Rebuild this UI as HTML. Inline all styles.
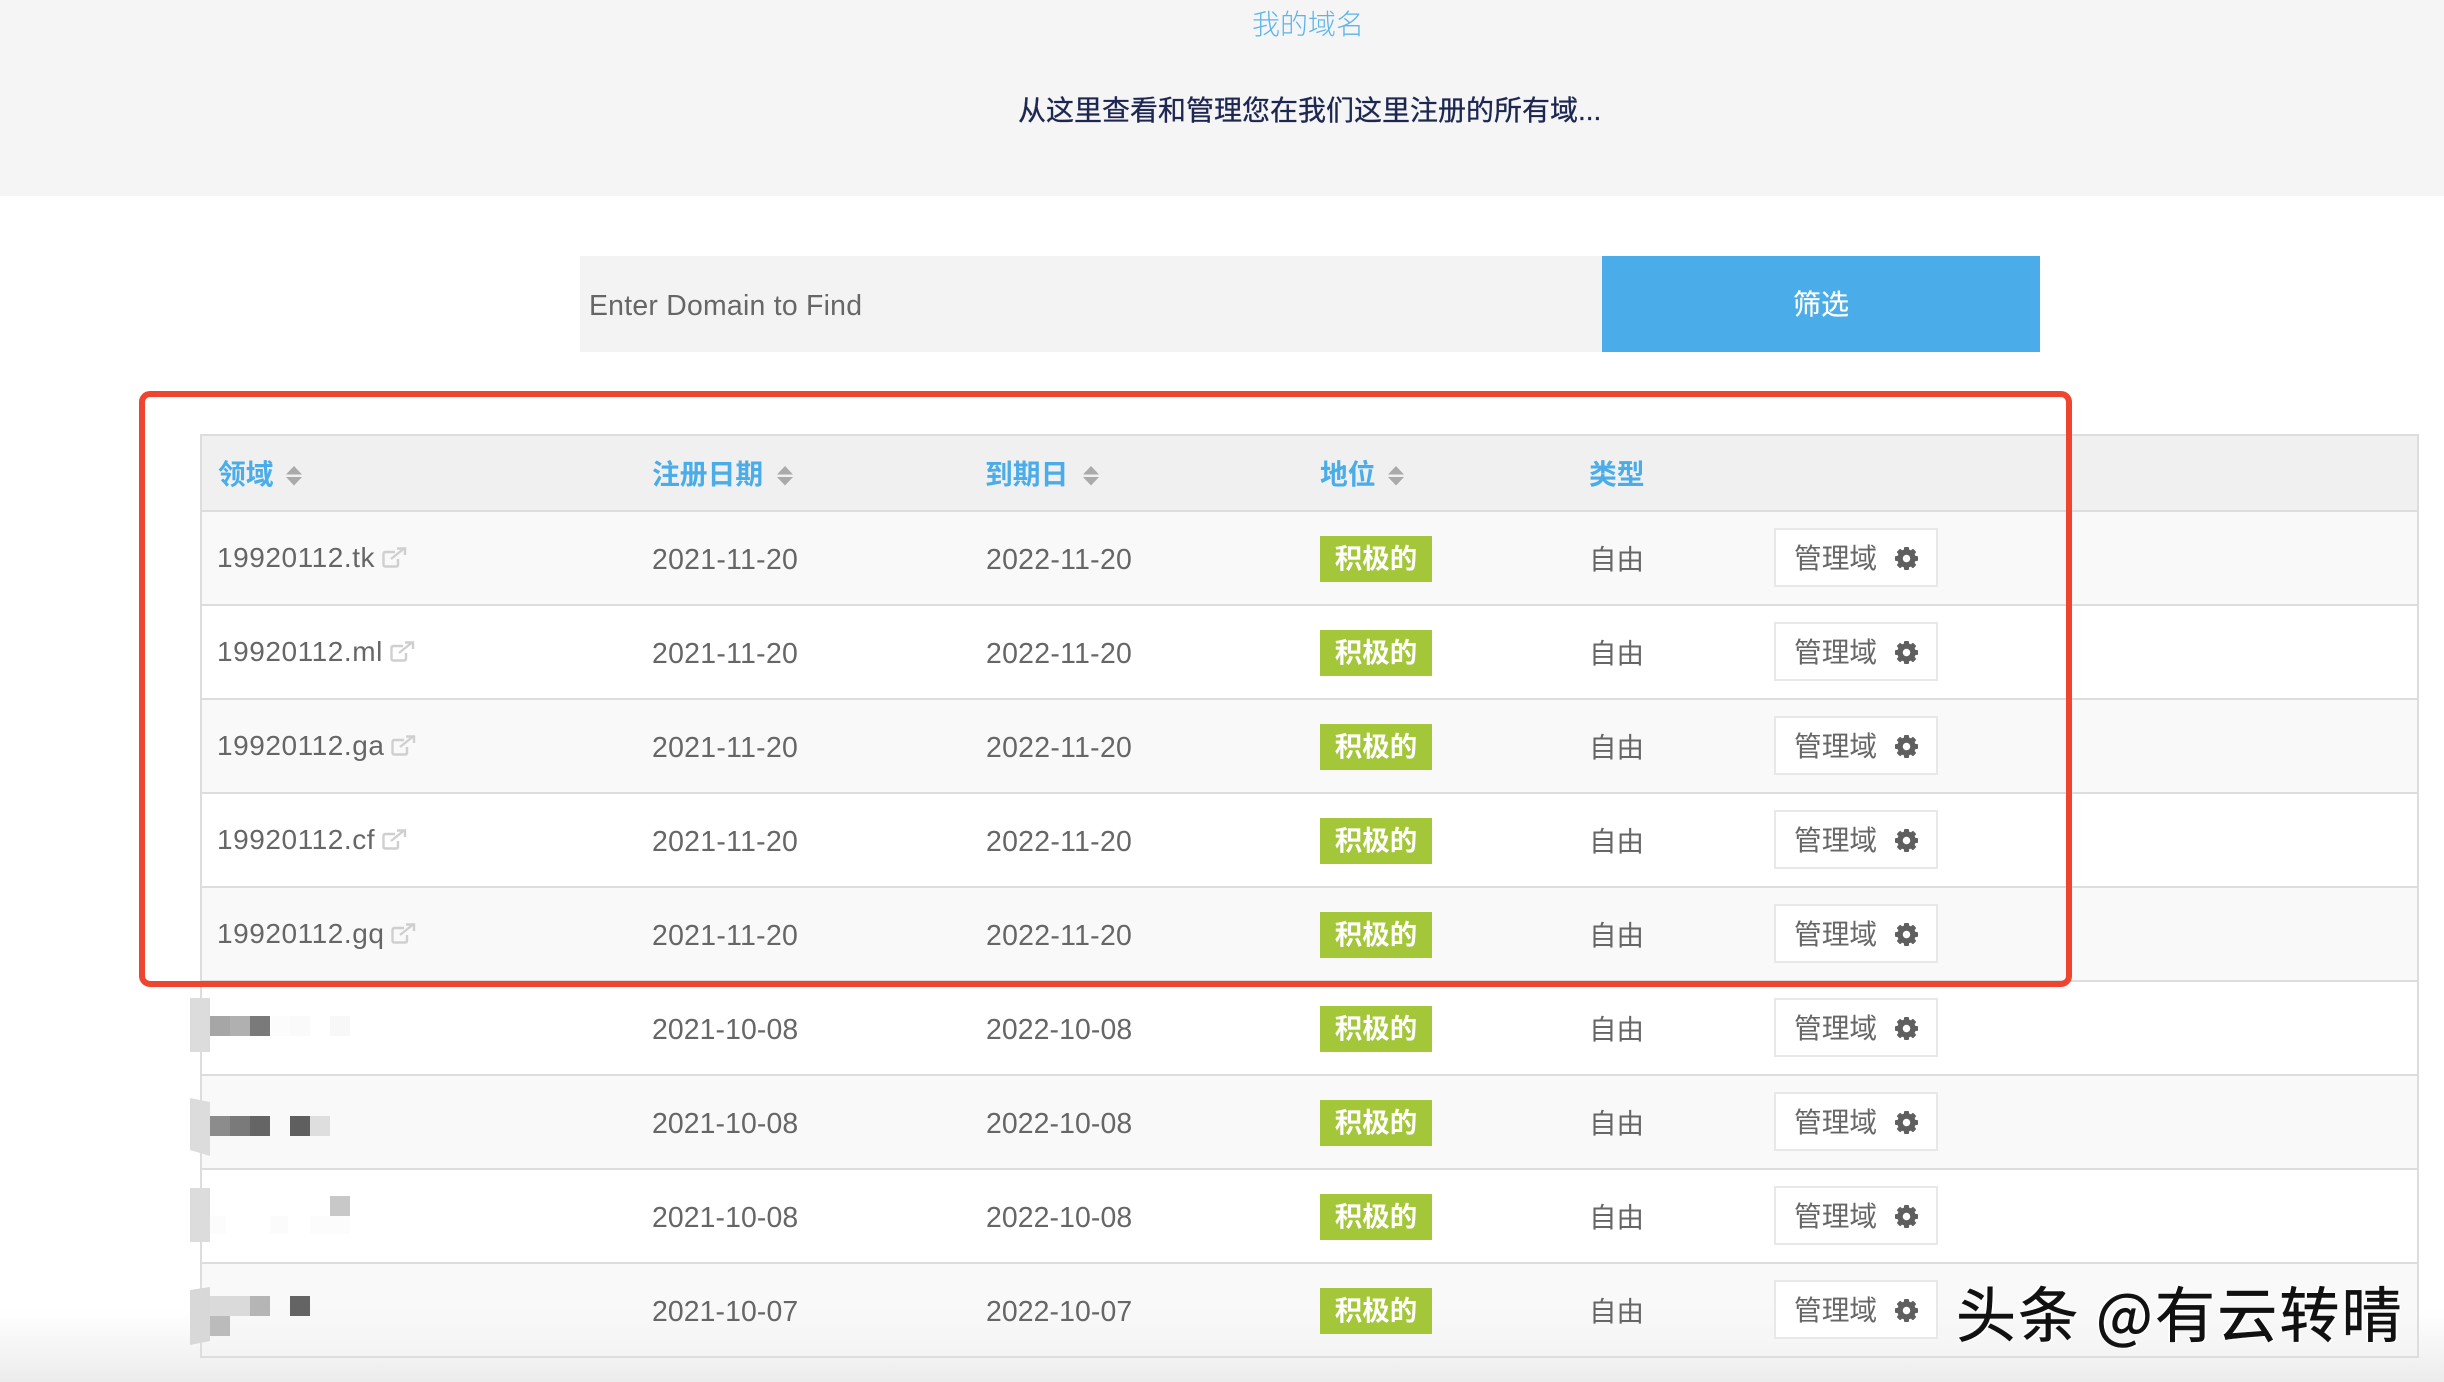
<!DOCTYPE html>
<html lang="zh"><head><meta charset="utf-8"><title>我的域名</title>
<style>
html,body{margin:0;padding:0;background:#fff}
body{width:2444px;height:1382px;position:relative;overflow:hidden;font-family:"Liberation Sans","Noto Sans CJK SC",sans-serif;color:#666;font-size:28px}
.band{position:absolute;left:0;top:0;width:2444px;height:196px;background:#f5f5f5}
.t{position:absolute;white-space:nowrap}
.title{margin-left:172px;width:2272px;text-align:center;top:5px;line-height:40px;font-size:28px;color:#5db4ea;font-weight:300}
.sub{left:1018px;top:91px;line-height:40px;font-size:28px;color:#1d2752;-webkit-text-stroke:.3px #1d2752}
.input{position:absolute;left:580px;top:256px;width:1022px;height:96px;background:#f3f3f3}
.ph{left:589px;top:286px;line-height:40px;font-size:28.4px;letter-spacing:.25px;color:#666}
.go{position:absolute;left:1602px;top:256px;width:438px;height:96px;background:#4aace8;color:#fff;text-align:center;line-height:98px;font-size:28px;-webkit-text-stroke:.2px #fff}
.tbl{position:absolute;left:200px;top:434px;width:2215px;height:920px;border:2px solid #ddd;box-sizing:content-box}
.head{position:absolute;left:200px;top:434px;width:2219px;height:78px;background:#f0f0f0;border:2px solid #ddd;box-sizing:border-box}
.h{position:absolute;top:455px;line-height:40px;color:#4aace8;font-weight:700;font-size:27.8px;white-space:nowrap}
.sort{position:absolute;top:466px}
.r{position:absolute;left:202px;width:2215px;height:94px;border-bottom:2px solid #ddd;box-sizing:border-box}
.odd{background:#f9f9f9}
.last{background:linear-gradient(#f9f9f9 45%,#f4f4f4)}
.r>*{position:absolute;white-space:nowrap}
.d{left:15px;top:26px;line-height:40px;letter-spacing:.55px;font-size:28px}
.d svg{margin-left:7px;vertical-align:-1px}
.a{left:450px;top:28px;line-height:40px;font-size:28.4px;letter-spacing:.3px}
.b{left:784px;top:28px;line-height:40px;font-size:28.4px;letter-spacing:.3px}
.n{letter-spacing:.1px}
.s{left:1118px;top:24px;width:112px;height:46px;background:#a4c639;color:#fff;font-weight:700;text-align:center;line-height:46px;font-size:27.5px}
.k{left:1387px;top:28px;line-height:40px;font-size:27.5px}
.m{left:1572px;top:16px;width:164px;height:59px;background:#fff;border:2px solid #e8e8e8;box-sizing:border-box}
.m b{position:absolute;left:18px;top:8.5px;line-height:40px;font-weight:400;font-size:27.7px}
.m svg{position:absolute;left:119px;top:17px}
.px{position:absolute}
.fade{position:absolute;left:0;top:1310px;width:2444px;height:72px;background:linear-gradient(rgba(236,236,236,0),#ececec)}
.red{position:absolute;left:139px;top:391px;width:1933px;height:596px;border:6px solid #ee4430;border-radius:11px;box-sizing:border-box}
.wm{position:absolute;left:1956px;top:1272px;line-height:80px;font-size:60px;color:#111;white-space:nowrap;font-weight:400;font-family:"WenQuanYi Zen Hei","Noto Sans CJK SC",sans-serif;-webkit-text-stroke:.6px #111;text-shadow:-2px -1px 0 #fff,2px 1px 0 #fff;letter-spacing:2.2px}
</style></head><body>
<svg width="0" height="0" style="position:absolute"><defs>
<g id="gear"><circle cx="11.5" cy="11.5" r="6.5" fill="none" stroke="#5f5f5f" stroke-width="5.5"/><g fill="#5f5f5f"><rect x="9" y="0" width="5" height="5" rx="1"/><rect x="9" y="18" width="5" height="5" rx="1"/><rect x="0" y="9" width="5" height="5" rx="1"/><rect x="18" y="9" width="5" height="5" rx="1"/><rect x="9" y="0" width="5" height="5" rx="1" transform="rotate(45 11.5 11.5)"/><rect x="9" y="18" width="5" height="5" rx="1" transform="rotate(45 11.5 11.5)"/><rect x="0" y="9" width="5" height="5" rx="1" transform="rotate(45 11.5 11.5)"/><rect x="18" y="9" width="5" height="5" rx="1" transform="rotate(45 11.5 11.5)"/></g></g>
<g id="ext" fill="none" stroke="#cfcfcf" stroke-width="2.4"><path d="M13 5H3.5Q1.5 5 1.5 7V17.5Q1.5 19.5 3.5 19.5H14Q16 19.5 16 17.5V12"/><path d="M9 12L22 1.5"/><path d="M15 1.5H23V8"/></g>
<g id="sort" fill="#aaa"><path d="M8 0L16 8.5H0Z"/><path d="M0 11H16L8 19.5Z"/></g>
</defs></svg>

<div class="band"></div>
<div class="t title">我的域名</div>
<div class="t sub">从这里查看和管理您在我们这里注册的所有域...</div>
<div class="input"></div>
<div class="t ph">Enter Domain to Find</div>
<div class="go">筛选</div>

<div class="fade"></div>
<div class="tbl"></div>
<div class="head"></div>
<div class="h" style="left:218px">领域</div><svg class="sort" style="left:286px" width="16" height="20"><use href="#sort"/></svg>
<div class="h" style="left:652px">注册日期</div><svg class="sort" style="left:777px" width="16" height="20"><use href="#sort"/></svg>
<div class="h" style="left:985px">到期日</div><svg class="sort" style="left:1083px" width="16" height="20"><use href="#sort"/></svg>
<div class="h" style="left:1320px">地位</div><svg class="sort" style="left:1388px" width="16" height="20"><use href="#sort"/></svg>
<div class="h" style="left:1589px">类型</div>

<div class="r odd" style="top:512px"><span class="d">19920112.tk<svg width="25" height="21"><use href="#ext"/></svg></span><span class="a">2021-11-20</span><span class="b">2022-11-20</span><span class="s">积极的</span><span class="k">自由</span><span class="m"><b>管理域</b><svg width="23" height="23"><use href="#gear"/></svg></span></div>
<div class="r" style="top:606px"><span class="d">19920112.ml<svg width="25" height="21"><use href="#ext"/></svg></span><span class="a">2021-11-20</span><span class="b">2022-11-20</span><span class="s">积极的</span><span class="k">自由</span><span class="m"><b>管理域</b><svg width="23" height="23"><use href="#gear"/></svg></span></div>
<div class="r odd" style="top:700px"><span class="d">19920112.ga<svg width="25" height="21"><use href="#ext"/></svg></span><span class="a">2021-11-20</span><span class="b">2022-11-20</span><span class="s">积极的</span><span class="k">自由</span><span class="m"><b>管理域</b><svg width="23" height="23"><use href="#gear"/></svg></span></div>
<div class="r" style="top:794px"><span class="d">19920112.cf<svg width="25" height="21"><use href="#ext"/></svg></span><span class="a">2021-11-20</span><span class="b">2022-11-20</span><span class="s">积极的</span><span class="k">自由</span><span class="m"><b>管理域</b><svg width="23" height="23"><use href="#gear"/></svg></span></div>
<div class="r odd" style="top:888px"><span class="d">19920112.gq<svg width="25" height="21"><use href="#ext"/></svg></span><span class="a">2021-11-20</span><span class="b">2022-11-20</span><span class="s">积极的</span><span class="k">自由</span><span class="m"><b>管理域</b><svg width="23" height="23"><use href="#gear"/></svg></span></div>
<div class="r" style="top:982px"><span class="a n">2021-10-08</span><span class="b n">2022-10-08</span><span class="s">积极的</span><span class="k">自由</span><span class="m"><b>管理域</b><svg width="23" height="23"><use href="#gear"/></svg></span></div>
<div class="r odd" style="top:1076px"><span class="a n">2021-10-08</span><span class="b n">2022-10-08</span><span class="s">积极的</span><span class="k">自由</span><span class="m"><b>管理域</b><svg width="23" height="23"><use href="#gear"/></svg></span></div>
<div class="r" style="top:1170px"><span class="a n">2021-10-08</span><span class="b n">2022-10-08</span><span class="s">积极的</span><span class="k">自由</span><span class="m"><b>管理域</b><svg width="23" height="23"><use href="#gear"/></svg></span></div>
<div class="r last" style="top:1264px"><span class="a n">2021-10-07</span><span class="b n">2022-10-07</span><span class="s">积极的</span><span class="k">自由</span><span class="m"><b>管理域</b><svg width="23" height="23"><use href="#gear"/></svg></span></div>

<svg class="px" style="left:180px;top:990px" width="190" height="370">
<path d="M10 8H30V62H10Z" fill="#dcdcdc"/>
<rect x="30" y="26" width="20" height="20" fill="#a6a6a6"/><rect x="50" y="26" width="20" height="20" fill="#b0b0b0"/><rect x="70" y="26" width="20" height="20" fill="#7a7a7a"/><rect x="90" y="26" width="20" height="20" fill="#fcfcfc"/><rect x="110" y="26" width="20" height="20" fill="#fafafa"/><rect x="150" y="26" width="20" height="20" fill="#f8f8f8"/>
<path d="M10 108L30 112V166L10 160Z" fill="#dcdcdc"/>
<rect x="30" y="126" width="20" height="20" fill="#8c8c8c"/><rect x="50" y="126" width="20" height="20" fill="#7a7a7a"/><rect x="70" y="126" width="20" height="20" fill="#656565"/><rect x="110" y="126" width="20" height="20" fill="#5f5f5f"/><rect x="130" y="126" width="20" height="20" fill="#dedede"/>
<path d="M10 198H30V252H10Z" fill="#dcdcdc"/>
<rect x="150" y="206" width="20" height="20" fill="#c8c8c8"/><rect x="30" y="226" width="16" height="18" fill="#fcfcfc"/><rect x="90" y="226" width="18" height="18" fill="#fbfbfb"/><rect x="130" y="226" width="40" height="18" fill="#fcfcfc"/>
<path d="M10 300L30 297V351L10 355Z" fill="#d8d8d8"/>
<rect x="30" y="306" width="40" height="20" fill="#dadada"/><rect x="70" y="306" width="20" height="20" fill="#b5b5b5"/><rect x="110" y="306" width="20" height="20" fill="#646464"/><rect x="30" y="326" width="20" height="20" fill="#bbb"/>
</svg>

<div class="red"></div>
<div class="wm">头条 @有云转晴</div>
</body></html>
